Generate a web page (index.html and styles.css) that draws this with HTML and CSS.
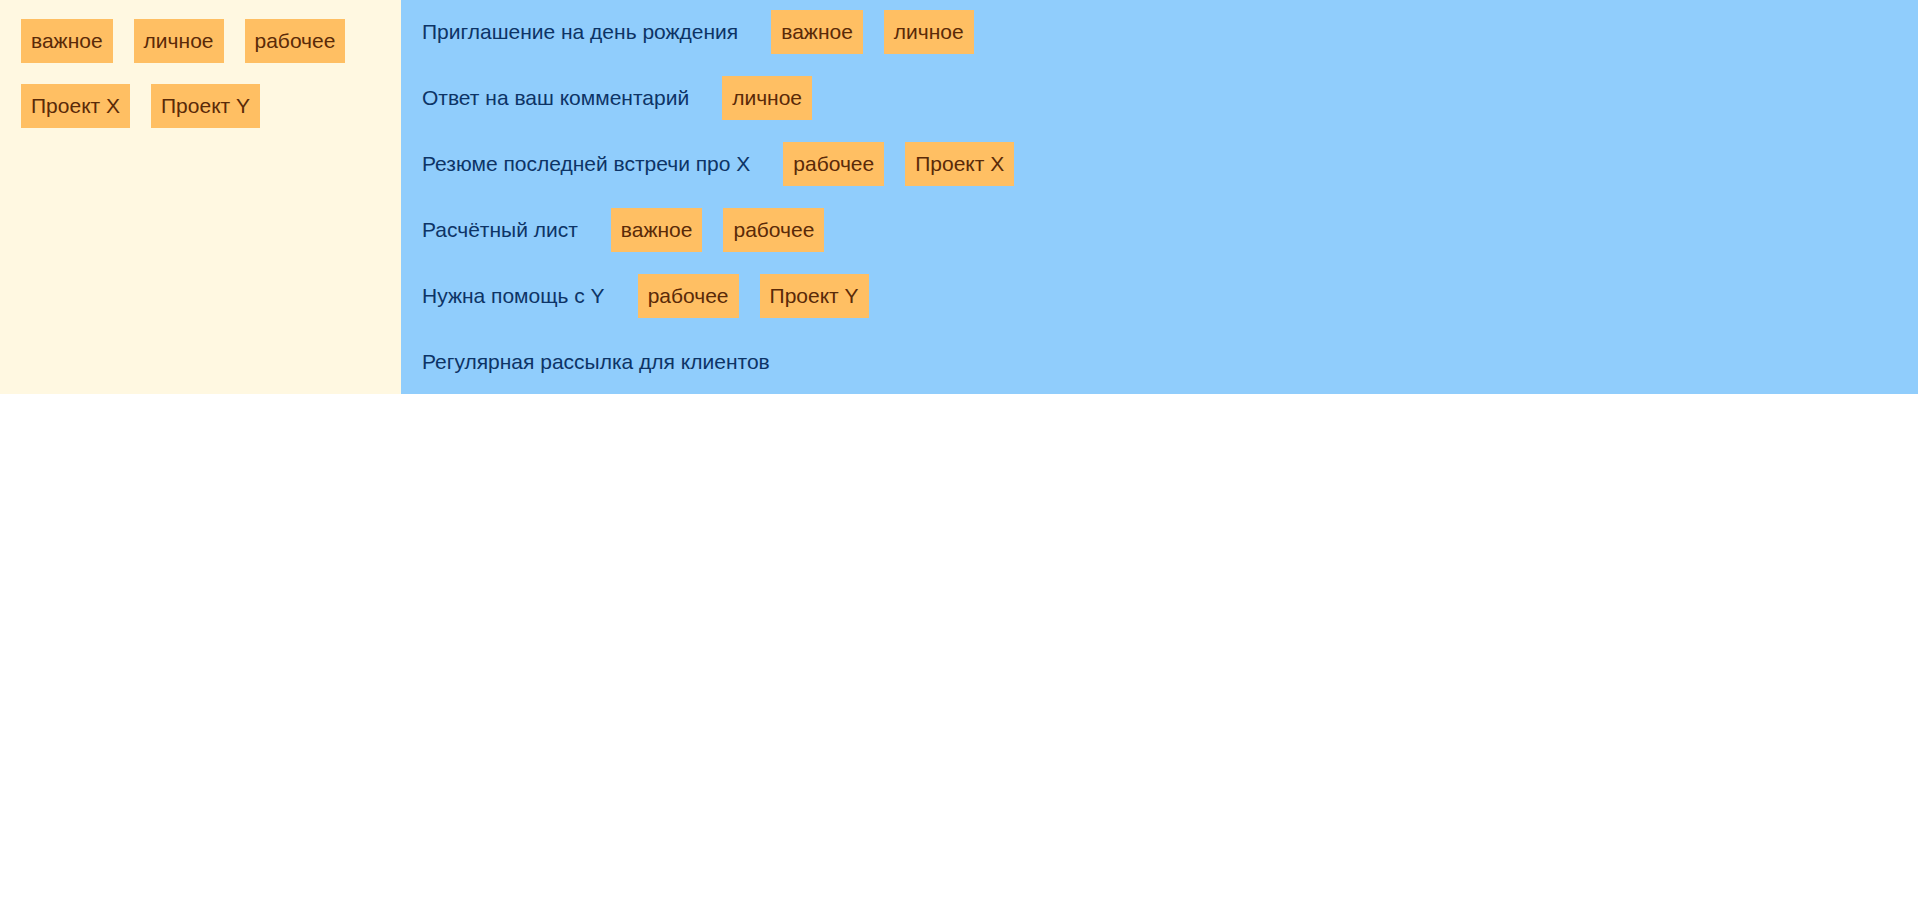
FILE: index.html
```html
<!DOCTYPE html>
<html lang="ru">
<head>
<meta charset="utf-8">
<title>Письма</title>
<link rel="stylesheet" href="styles.css">
</head>
<body>
<div class="app">
  <aside class="sidebar">
    <span class="tag">важное</span>
    <span class="tag">личное</span>
    <span class="tag">рабочее</span>
    <span class="tag">Проект X</span>
    <span class="tag">Проект Y</span>
  </aside>
  <main class="list">
    <div class="row"><span class="subject">Приглашение на день рождения</span><span class="tag">важное</span><span class="tag">личное</span></div>
    <div class="row"><span class="subject">Ответ на ваш комментарий</span><span class="tag">личное</span></div>
    <div class="row"><span class="subject">Резюме последней встречи про X</span><span class="tag">рабочее</span><span class="tag">Проект X</span></div>
    <div class="row"><span class="subject">Расчётный лист</span><span class="tag">важное</span><span class="tag">рабочее</span></div>
    <div class="row"><span class="subject">Нужна помощь с Y</span><span class="tag">рабочее</span><span class="tag">Проект Y</span></div>
    <div class="row"><span class="subject">Регулярная рассылка для клиентов</span></div>
  </main>
</div>
</body>
</html>
```
FILE: styles.css
```css
html, body {
  margin: 0;
  padding: 0;
  background: #ffffff;
}

body {
  font-family: "Liberation Sans", Arial, sans-serif;
  font-size: 21px;
}

.app {
  display: flex;
  align-items: stretch;
}

.sidebar {
  width: 401px;
  flex: none;
  box-sizing: border-box;
  background: #fff8e1;
  padding: 19px 20px 0 21px;
  display: flex;
  flex-wrap: wrap;
  align-content: flex-start;
  gap: 21px;
}

.list {
  flex: 1;
  background: #90cdfc;
  display: flex;
  flex-direction: column;
  gap: 2px;
}

.row {
  display: flex;
  align-items: center;
  min-height: 44px;
  padding: 10px 21px;
}

.subject {
  color: #0d3466;
  margin-right: 12px;
}

.tag {
  display: inline-block;
  background: #ffbf63;
  color: #5a2a08;
  padding: 10px 10px;
  line-height: 24px;
  white-space: nowrap;
}

.row .tag {
  margin-left: 21px;
}
```
